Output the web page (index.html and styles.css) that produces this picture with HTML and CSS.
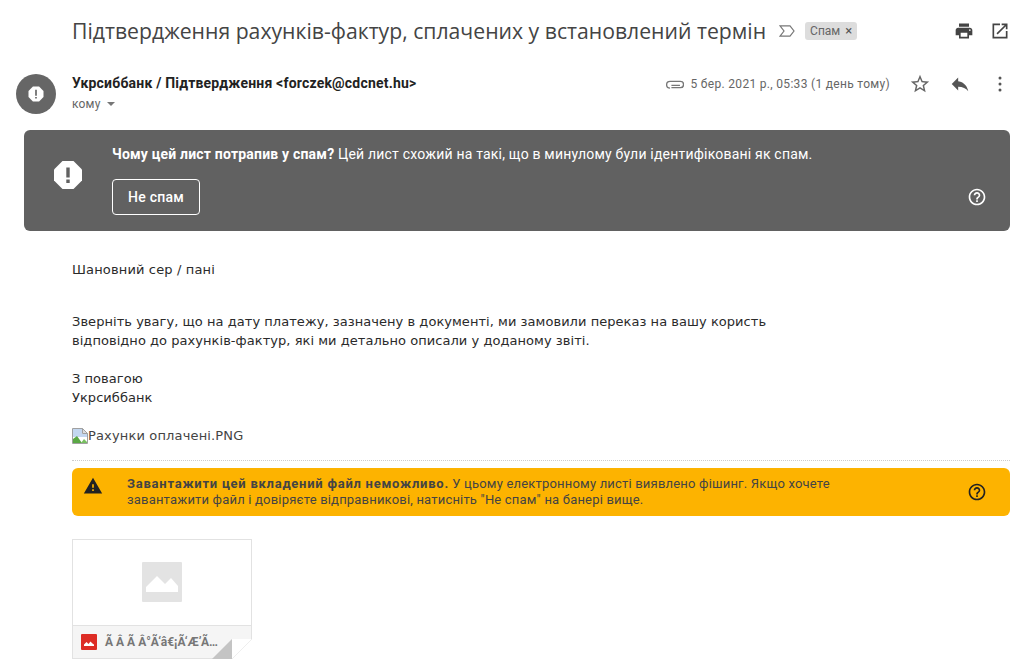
FILE: index.html
```html
<!DOCTYPE html>
<html lang="uk">
<head>
<meta charset="utf-8">
<title>Підтвердження рахунків-фактур</title>
<link rel="stylesheet" href="styles.css">
</head>
<body>
<header class="subject-row">
  <h1 class="subject">Підтвердження рахунків-фактур, сплачених у встановлений термін</h1>
  <svg class="importance" viewBox="0 0 16 12" width="16" height="12"><path d="M1 .8h10l4 5.200-4 5.200H1l4-5.200z" fill="none" stroke="#777" stroke-width="1.200"/></svg>
  <span class="label">Спам <span class="label-x">×</span></span>
  <div class="subject-actions">
    <svg viewBox="0 0 24 24" width="20" height="20"><path fill="#444" d="M19 8H5c-1.660 0-3 1.340-3 3v6h4v4h12v-4h4v-6c0-1.660-1.340-3-3-3zm-3 11H8v-5h8v5zm3-7c-.550 0-1-.450-1-1s.450-1 1-1 1 .450 1 1-.450 1-1 1zm-1-9H6v4h12V3z"/></svg>
    <svg viewBox="0 0 24 24" width="20" height="20"><path fill="#444" d="M19 19H5V5h7V3H3v18h18v-9h-2v7zM14 3v2h3.590l-9.830 9.830 1.410 1.410L19 6.410V10h2V3h-7z"/></svg>
  </div>
</header>

<section class="sender-row">
  <div class="avatar">
    <svg viewBox="0 0 24 24" width="20" height="20"><path fill="#fff" d="M15.700 3H8.300L3 8.300v7.400L8.300 21h7.400l5.300-5.300V8.300z"/><path fill="#666" d="M11 7h2v7h-2zM11 15.500h2v2h-2z"/></svg>
  </div>
  <div class="sender-info">
    <div class="sender-name">Укрсиббанк / Підтвердження &lt;forczek@cdcnet.hu&gt;</div>
    <div class="recipient">кому <span class="caret"></span></div>
  </div>
  <div class="sender-meta">
    <svg class="clip" viewBox="0 0 20 12" width="18" height="11"><path d="M6 9.500h10a3.200 3.200 0 0 0 0-7H4.500a3.800 3.800 0 0 0 0 7.600M6 7h9.500" fill="none" stroke="#777" stroke-width="1.500"/></svg>
    <span class="date">5 бер. 2021 р., 05:33 (1 день тому)</span>
    <svg class="star" viewBox="0 0 24 24" width="22" height="22"><path fill="#666" d="M22 9.240l-7.190-.620L12 2 9.190 8.630 2 9.240l5.460 4.730L5.820 21 12 17.270 18.180 21l-1.630-7.030L22 9.240zM12 15.400l-3.760 2.270 1-4.280-3.320-2.880 4.380-.380L12 6.100l1.710 4.040 4.380.380-3.320 2.880 1 4.280L12 15.400z"/></svg>
    <svg class="reply" viewBox="0 0 24 24" width="22" height="22"><path fill="#555" d="M10 9V5l-7 7 7 7v-4.100c5 0 8.500 1.600 11 5.100-1-5-4-10-11-11z"/></svg>
    <svg class="more" viewBox="0 0 4 16" width="4" height="16"><circle cx="2" cy="2" r="1.500" fill="#555"/><circle cx="2" cy="8" r="1.500" fill="#555"/><circle cx="2" cy="14" r="1.500" fill="#555"/></svg>
  </div>
</section>

<section class="spam-banner">
  <svg class="spam-icon" viewBox="0 0 30 30" width="30" height="30"><path fill="#fff" d="M9.500 1h11L29 9.500v11L20.500 29h-11L1 20.500v-11z"/><path fill="#616161" d="M13.300 7.500h3.400v10h-3.400zM13.300 19.500h3.400v3.400h-3.400z"/></svg>
  <div class="spam-main">
    <p class="spam-text"><strong>Чому цей лист потрапив у спам?</strong> Цей лист схожий на такі, що в минулому були ідентифіковані як спам.</p>
    <button class="spam-button">Не спам</button>
  </div>
  <svg class="help" viewBox="0 0 24 24" width="20" height="20"><path fill="#fff" d="M11 18h2v-2h-2v2zm1-16C6.480 2 2 6.480 2 12s4.480 10 10 10 10-4.480 10-10S17.520 2 12 2zm0 18c-4.410 0-8-3.590-8-8s3.590-8 8-8 8 3.590 8 8-3.590 8-8 8zm0-14c-2.210 0-4 1.790-4 4h2c0-1.100.900-2 2-2s2 .900 2 2c0 2-3 1.750-3 5h2c0-2.250 3-2.500 3-5 0-2.210-1.790-4-4-4z"/></svg>
</section>

<main class="message">
  <p class="para">Шановний сер / пані</p>
  <p class="para">Зверніть увагу, що на дату платежу, зазначену в документі, ми замовили переказ на вашу користь<br>відповідно до рахунків-фактур, які ми детально описали у доданому звіті.</p>
  <p class="para">З повагою<br>Укрсиббанк</p>
  <p class="para broken">
    <svg class="broken-icon" viewBox="0 0 16 16" width="16" height="16"><path d="M.5.500h10l5 5v10H.500z" fill="#fff" stroke="#a0a0a0"/><path d="M10.500.500v5h5z" fill="#ddd" stroke="#a0a0a0"/><path d="M1 1h9v5h5v3H1z" fill="#c3d7f0"/><path d="M1 15v-4l4-3 5 7z" fill="#5aa845"/><path d="M9 15l3-4 3 3v1z" fill="#78c060"/></svg><span>Рахунки оплачені.PNG</span>
  </p>
</main>

<div class="attach-area">
  <div class="warning">
    <svg class="warn-icon" viewBox="0 0 24 24" width="20" height="20"><path fill="#222" d="M1 21h22L12 2 1 21zm12-3h-2v-2h2v2zm0-4h-2v-4h2v4z"/></svg>
    <p class="warn-text"><strong>Завантажити цей вкладений файл неможливо.</strong> У цьому електронному листі виявлено фішинг. Якщо хочете завантажити файл і довіряєте відправникові, натисніть "Не спам" на банері вище.</p>
    <svg class="help" viewBox="0 0 24 24" width="20" height="20"><path fill="#222" d="M11 18h2v-2h-2v2zm1-16C6.480 2 2 6.480 2 12s4.480 10 10 10 10-4.480 10-10S17.520 2 12 2zm0 18c-4.410 0-8-3.590-8-8s3.590-8 8-8 8 3.590 8 8-3.590 8-8 8zm0-14c-2.210 0-4 1.790-4 4h2c0-1.100.900-2 2-2s2 .900 2 2c0 2-3 1.750-3 5h2c0-2.250 3-2.500 3-5 0-2.210-1.790-4-4-4z"/></svg>
  </div>
  <div class="card">
    <div class="card-preview">
      <svg viewBox="0 0 40 40" width="40" height="40"><rect width="40" height="40" rx="1" fill="#e3e3e3"/><path fill="#fff" d="M4 30v-5l11-11 8 8 6-6 7 8v6z"/></svg>
    </div>
    <div class="card-foot">
      <svg viewBox="0 0 16 16" width="16" height="16"><rect width="16" height="16" rx="1" fill="#dd2c25"/><path fill="#fff" d="M3 12v-1.500l2.500-2.500 2 2 2-2.500 1.500 1.500 1 1 1 .500V12z"/></svg>
      <span class="card-name">Ã Â Ã Â°Ã‘â€¡Ã‘Æ’Ã…</span>
    </div>
    <svg class="fold" viewBox="0 0 40 20" width="40" height="20"><path fill="#c4c4c4" d="M0 20L20 0v20z"/><path fill="#fff" d="M20 20L40 0H20z"/><path fill="#fff" d="M20 20h20V0z"/><path d="M20 20L40 0" stroke="#eee" fill="none"/></svg>
  </div>
</div>
</body>
</html>
```

FILE: styles.css
```css
* { box-sizing: border-box; }
html, body { margin: 0; padding: 0; background: #fff; }
body { width: 1025px; height: 672px; overflow: hidden; font-family: Roboto, sans-serif; color: #222; }
p, h1 { margin: 0; }

.subject-row { display: flex; align-items: center; height: 62px; padding: 0 15px 0 72px; }
.subject { font-family: "Open Sans", sans-serif; font-size: 21.200px; font-weight: 400; color: #444; white-space: nowrap; line-height: 28px; }
.importance { margin-left: 13px; flex: none; }
.label { margin-left: 10px; height: 18px; padding: 0 5px; border-radius: 3px; background: #ddd; color: #666; font-size: 12px; line-height: 18px; white-space: nowrap; }
.label-x { margin-left: 2px; font-size: 13px; color: #555; }
.subject-actions { margin-left: auto; display: flex; gap: 16px; }

.sender-row { display: flex; height: 68px; padding: 12px 14px 0 16px; }
.avatar { width: 40px; height: 40px; border-radius: 50%; background: #666; display: flex; align-items: center; justify-content: center; flex: none; }
.sender-info { margin-left: 16px; }
.sender-name { font-size: 14px; font-weight: 700; color: #222; line-height: 18px; letter-spacing: .2px; }
.recipient { margin-top: 4px; font-size: 12px; line-height: 16px; color: #666; letter-spacing: .2px; }
.caret { display: inline-block; margin-left: 3px; vertical-align: 2px; border: 4px solid transparent; border-top-color: #777; border-bottom-width: 0; }
.sender-meta { margin-left: auto; display: flex; align-items: center; height: 20px; font-size: 12px; color: #666; }
.date { margin-left: 7px; white-space: nowrap; letter-spacing: .31px; }
.star { margin-left: 19px; }
.reply { margin-left: 18px; }
.more { margin-left: 27px; margin-right: 9px; }

.spam-banner { display: flex; align-items: flex-start; height: 101px; margin: 0 15px 0 24px; padding: 15px 23px 0 29px; background: #616161; border-radius: 6px; color: #fff; }
.spam-icon { flex: none; margin-top: 15px; }
.spam-main { flex: 1; margin-left: 29px; }
.spam-text { font-size: 14px; line-height: 18px; letter-spacing: .2px; }
.spam-button { display: block; margin-top: 16px; width: 88px; height: 36px; border: 1px solid #fff; border-radius: 4px; background: transparent; color: #fff; font-family: Roboto, sans-serif; font-size: 14px; font-weight: 500; letter-spacing: .25px; padding: 0; }
.spam-banner .help { margin-top: 42px; }

.message { padding: 29px 0 0 72px; font-family: "DejaVu Sans", Verdana, sans-serif; font-size: 13px; letter-spacing: .045px; line-height: 19px; color: #2a2a2a; }
.para { margin-bottom: 19px; }
.para:first-child { margin-bottom: 33px; letter-spacing: .15px; }
.broken { display: flex; align-items: center; height: 19px; margin-bottom: 0; color: #444; letter-spacing: .15px; }
.broken-icon { flex: none; }

.attach-area { margin: 15px 15px 0 72px; border-top: 1px dotted #ccc; padding-top: 7px; }
.warning { display: flex; align-items: center; height: 48px; padding: 0 23px 0 11px; background: #fdb300; border-radius: 6px; }
.warn-icon { flex: none; align-self: flex-start; margin-top: 8px; }
.warn-text { flex: 1; margin-left: 24px; margin-right: 100px; font-size: 13px; line-height: 16px; color: #444; letter-spacing: .19px; }
.warn-text strong { color: #444; letter-spacing: .75px; }

.card { position: relative; width: 180px; height: 120px; margin-top: 23px; border: 1px solid #e2e2e2; }
.card-preview { height: 85px; padding-bottom: 2px; display: flex; align-items: center; justify-content: center; }
.card-foot { display: flex; align-items: center; height: 33px; padding-left: 8px; border-top: 1px solid #e2e2e2; background: #f5f5f5; }
.card-name { margin-left: 8px; font-size: 12px; font-weight: 700; color: #777; white-space: nowrap; }
.fold { position: absolute; right: -1px; bottom: -1px; }
```
